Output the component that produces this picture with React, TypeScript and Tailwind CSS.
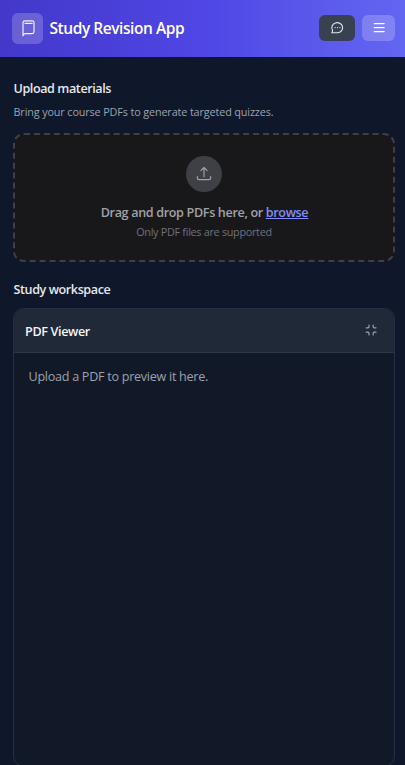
import React from 'react';

function BookIcon() {
  return (
    <svg className="h-[18px] w-[18px]" viewBox="0 0 18 18" fill="none" stroke="currentColor" strokeWidth="1.15" strokeLinecap="round" strokeLinejoin="round">
      <path d="M4 16.8V3.6Q4 1.8 5.8 1.8H13.2Q15 1.8 15 3.6V12.8Q15 14.6 13.2 14.6H6.2Q4.5 14.6 4 16.8" />
      <path d="M6 4.4H13.1" />
    </svg>
  );
}

function ChatIcon() {
  return (
    <svg className="h-[14px] w-[14px]" viewBox="0 0 14 14" fill="none" stroke="currentColor" strokeWidth="1.1" strokeLinecap="round" strokeLinejoin="round">
      <path d="M2.5 9.2A5.4 5.1 0 1 1 7.5 11.8H1.7Q2.8 10.8 2.5 9.2Z" />
      <path d="M5.1 6.6H5.2M7.5 6.6H7.6M9.9 6.6H10" />
    </svg>
  );
}

function MenuIcon() {
  return (
    <svg className="h-[14px] w-[14px]" viewBox="0 0 14 14" fill="none" stroke="currentColor" strokeWidth="1.2" strokeLinecap="round">
      <path d="M2.2 2.6H12.2M2.2 6.6H12.2M2.2 10.6H12.2" />
    </svg>
  );
}

function UploadIcon() {
  return (
    <svg className="h-[18px] w-[18px]" viewBox="0 0 18 18" fill="none" stroke="currentColor" strokeWidth="1.15" strokeLinecap="round" strokeLinejoin="round">
      <path d="M9 11.8V2.6M5.9 5.6L9 2.5L12.1 5.6" />
      <path d="M2.4 11.6V13.2Q2.4 14.6 4 14.6H14Q15.6 14.6 15.6 13.2V11.6" />
    </svg>
  );
}

function ShrinkIcon() {
  return (
    <svg className="h-[14px] w-[14px]" viewBox="0 0 14 14" fill="none" stroke="currentColor" strokeWidth="1.2" strokeLinecap="round" strokeLinejoin="round">
      <path d="M5 2V3.8Q5 4.8 4 4.8H2.2M9.2 2V3.8Q9.2 4.8 10.2 4.8H12M5 12V10.2Q5 9.2 4 9.2H2.2M9.2 12V10.2Q9.2 9.2 10.2 9.2H12" />
    </svg>
  );
}

export default function App() {
  return (
    <div className="flex h-[765px] w-full flex-col overflow-hidden bg-[#0f172a] font-['Segoe_UI','Open_Sans',sans-serif] text-[#e5e7eb]">
      <header className="flex h-[57px] shrink-0 items-center justify-between bg-linear-to-r from-[#4338ca] via-[#4f46e5] to-[#6366f1] pr-[10px] pb-px pl-3">
        <div className="flex items-center gap-[6.5px]">
          <div className="flex h-[31px] w-[31px] items-center justify-center rounded-[6px] bg-white/20 text-[#f3f4f6]">
            <BookIcon />
          </div>
          <h1 className="text-[15.5px] leading-6 font-semibold tracking-[-0.44px] whitespace-nowrap text-white">Study Revision App</h1>
        </div>
        <div className="flex items-center gap-[7px]">
          <button className="flex h-[26px] w-9 items-center justify-center rounded-[6px] bg-[#374151] text-[#e5e7eb]">
            <ChatIcon />
          </button>
          <button className="flex h-[26px] w-[33px] items-center justify-center rounded-[6px] bg-white/20 text-white">
            <MenuIcon />
          </button>
        </div>
      </header>
      <main className="flex min-h-0 flex-1 flex-col pr-[10px] pl-[13px]">
        <h2 className="mt-[22px] h-5 pl-[0.5px] text-[12.6px] leading-5 font-semibold tracking-[-0.42px]">Upload materials</h2>
        <p className="mt-[4px] h-[18px] pl-[0.5px] text-[10.8px] leading-[18px] font-medium tracking-[-0.12px] text-[#9ca3af]">Bring your course PDFs to generate targeted quizzes.</p>
        <section className="mt-[12px] flex h-[129px] shrink-0 flex-col items-center rounded-[11px] border-2 border-dashed border-[#3f3f46] bg-[#18181b] pt-[21px]">
          <div className="flex h-9 w-9 items-center justify-center rounded-full bg-[#3f3f46] text-[#a1a1aa]">
            <UploadIcon />
          </div>
          <p className="mt-[11px] h-5 pl-px text-[12.6px] leading-5 font-semibold tracking-[-0.35px] text-[#a1a1aa]">
            Drag and drop PDFs here, or <span className="text-[#818cf8] underline">browse</span>
          </p>
          <p className="h-[18px] text-[10.8px] leading-[18px] tracking-[-0.28px] text-[#71717a]">Only PDF files are supported</p>
        </section>
        <h2 className="mt-[18px] h-5 pl-[0.5px] text-[12.6px] leading-5 font-semibold tracking-[-0.42px]">Study workspace</h2>
        <section className="mt-[8px] flex h-[459px] shrink-0 flex-col overflow-hidden rounded-[11px] border border-[#253041] bg-[#111827]">
          <div className="flex h-[44px] shrink-0 items-center justify-between border-b border-[#2d3746] bg-[#1f2937] pr-4 pl-[11px]">
            <h3 className="pt-[2px] text-[12.6px] leading-5 font-semibold tracking-[-0.36px] text-[#f3f4f6]">PDF Viewer</h3>
            <span className="pb-px text-[#9ca3af]"><ShrinkIcon /></span>
          </div>
          <p className="mt-[14px] ml-[14.5px] text-[12.6px] leading-5 tracking-[-0.28px] text-[#9ca3af]">Upload a PDF to preview it here.</p>
        </section>
      </main>
    </div>
  );
}
